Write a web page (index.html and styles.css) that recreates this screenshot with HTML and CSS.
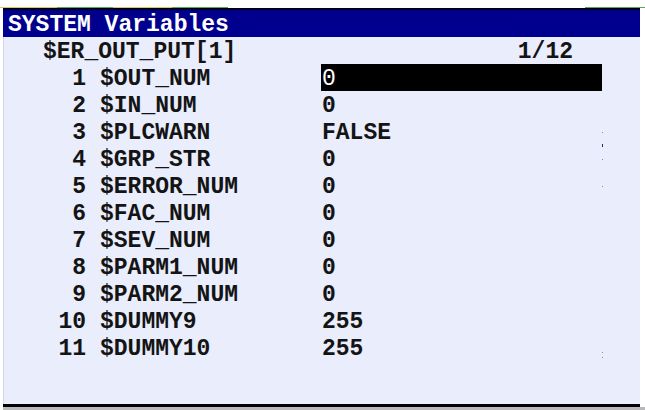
FILE: index.html
```html
<!DOCTYPE html>
<html>
<head>
<meta charset="utf-8">
<link rel="stylesheet" href="styles.css">
</head>
<body>
<div class="screen">
  <div class="tabs">
    <span class="tab yellow"></span>
    <span class="tab green"></span>
    <span class="tab gap"></span>
    <span class="tab yellow"></span>
    <span class="tab green"></span>
    <span class="tab fill"></span>
    <span class="tab green end"></span>
  </div>
  <div class="frame">
    <div class="titlebar">SYSTEM Variables</div>
    <div class="panel">
      <div class="header">
        <span>$ER_OUT_PUT[1]</span>
        <span>1/12</span>
      </div>
      <div class="rows">
        <div class="row"><span class="num">1</span><span class="name">$OUT_NUM</span><span class="val sel">0</span></div>
        <div class="row"><span class="num">2</span><span class="name">$IN_NUM</span><span class="val">0</span></div>
        <div class="row"><span class="num">3</span><span class="name">$PLCWARN</span><span class="val">FALSE</span></div>
        <div class="row"><span class="num">4</span><span class="name">$GRP_STR</span><span class="val">0</span></div>
        <div class="row"><span class="num">5</span><span class="name">$ERROR_NUM</span><span class="val">0</span></div>
        <div class="row"><span class="num">6</span><span class="name">$FAC_NUM</span><span class="val">0</span></div>
        <div class="row"><span class="num">7</span><span class="name">$SEV_NUM</span><span class="val">0</span></div>
        <div class="row"><span class="num">8</span><span class="name">$PARM1_NUM</span><span class="val">0</span></div>
        <div class="row"><span class="num">9</span><span class="name">$PARM2_NUM</span><span class="val">0</span></div>
        <div class="row"><span class="num">10</span><span class="name">$DUMMY9</span><span class="val">255</span></div>
        <div class="row"><span class="num">11</span><span class="name">$DUMMY10</span><span class="val">255</span></div>
      </div>
      <span class="dot d1"></span>
      <span class="dot d2"></span>
      <span class="dot d3"></span>
      <span class="dot d4"></span>
      <span class="dot d5"></span>
      <span class="dot d6"></span>
    </div>
    <div class="bottomline"></div>
  </div>
  <div class="footer"></div>
</div>
</body>
</html>
```
FILE: styles.css
```css
html, body {
  margin: 0;
  padding: 0;
  background: #ffffff;
}
.screen {
  width: 645px;
  height: 410px;
  overflow: hidden;
  font-family: "Liberation Mono", "Courier New", monospace;
  font-weight: bold;
  font-size: 23px;
  color: #141414;
}
.tabs {
  display: flex;
  height: 8px;
}
.tab {
  display: block;
  height: 7px;
  border-bottom: 1px solid transparent;
}
.tab.yellow { width: 57px; border-bottom-color: #d8c86a; }
.tab.green { width: 56px; border-bottom-color: #58a858; }
.tab.gap { width: 2px; border-bottom-color: #c0c0c0; }
.tab.fill { width: 357px; border-bottom-color: #ffffff; }
.tab.end { width: 60px; }
.frame {
  margin-left: 3px;
  width: 637px;
}
.titlebar {
  height: 28px;
  border-top: 1px solid #000000;
  background: linear-gradient(#000030 0px, #00008c 2px, #00008f 100%);
  color: #ffffff;
  padding-left: 5px;
  line-height: 32px;
  overflow: hidden;
  white-space: pre;
}
.panel {
  position: relative;
  height: 367px;
  background: #e9edfc;
  border-left: 1px solid #d2d6ea;
  box-sizing: border-box;
}
.header {
  display: flex;
  justify-content: space-between;
  height: 27px;
  line-height: 31px;
  padding-left: 39px;
  padding-right: 67px;
  white-space: pre;
}
.rows {
  display: flex;
  flex-direction: column;
}
.row {
  display: grid;
  grid-template-columns: 28px 208px 280px;
  grid-template-rows: 27px;
  column-gap: 14px;
  height: 27px;
  line-height: 31px;
  padding-left: 54px;
  white-space: pre;
}
.row .num { text-align: right; }
.row .val.sel {
  background: #000000;
  color: #ffffff;
  font-weight: normal;
  margin-left: -1px;
  padding-left: 1px;
}
.bottomline {
  height: 3px;
  background: #000000;
}
.footer {
  height: 4px;
  margin-left: 3px;
  background: #b8b8bc;
}
.dot {
  position: absolute;
  left: 598px;
  width: 1px;
  height: 1px;
  background: #8a8ca0;
}
.d1 { top: 95px; }
.d2 { top: 107px; height: 3px; background: #1a2a6a; }
.d3 { top: 122px; }
.d4 { top: 149px; }
.d5 { top: 315px; }
.d6 { top: 320px; }
```
